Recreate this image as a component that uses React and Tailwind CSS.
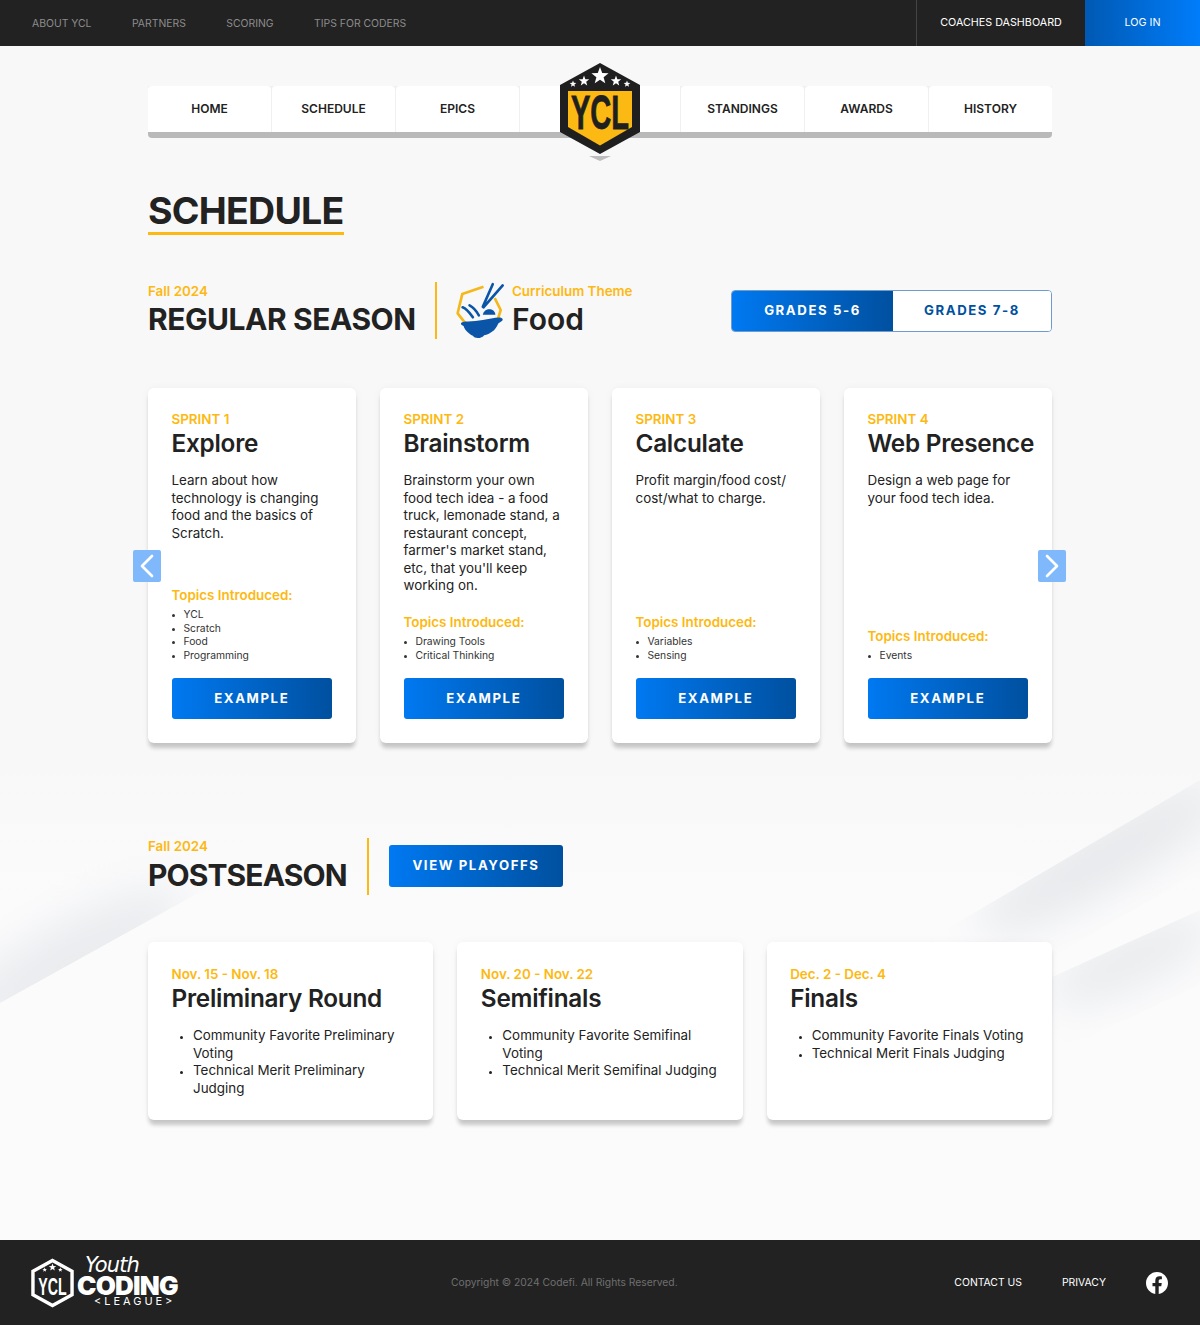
import { ChevronLeft, ChevronRight } from "lucide-react";

const sans = "font-['Inter','Liberation_Sans',sans-serif]";
const blueBtn = "bg-gradient-to-r from-[#0079f2] to-[#00509f] text-white font-bold tracking-[0.12em] rounded-[3px]";
const cardShadow = "shadow-[0_6px_4px_-1px_rgba(0,0,0,0.2),0_0_8px_rgba(0,0,0,0.04)]";

const topLinks = ["ABOUT YCL", "PARTNERS", "SCORING", "TIPS FOR CODERS"];
const leftTabs = ["HOME", "SCHEDULE", "EPICS"];
const rightTabs = ["STANDINGS", "AWARDS", "HISTORY"];

const sprints = [
  { label: "SPRINT 1", title: "Explore", text: ["Learn about how", "technology is changing", "food and the basics of", "Scratch."], topics: ["YCL", "Scratch", "Food", "Programming"] },
  { label: "SPRINT 2", title: "Brainstorm", text: ["Brainstorm your own", "food tech idea - a food", "truck, lemonade stand, a", "restaurant concept,", "farmer's market stand,", "etc, that you'll keep", "working on."], topics: ["Drawing Tools", "Critical Thinking"] },
  { label: "SPRINT 3", title: "Calculate", text: ["Profit margin/food cost/", "cost/what to charge."], topics: ["Variables", "Sensing"] },
  { label: "SPRINT 4", title: "Web Presence", text: ["Design a web page for", "your food tech idea."], topics: ["Events"] },
];

const rounds = [
  { date: "Nov. 15 - Nov. 18", title: "Preliminary Round", items: [["Community Favorite Preliminary", "Voting"], ["Technical Merit Preliminary", "Judging"]] },
  { date: "Nov. 20 - Nov. 22", title: "Semifinals", items: [["Community Favorite Semifinal", "Voting"], ["Technical Merit Semifinal Judging"]] },
  { date: "Dec. 2 - Dec. 4", title: "Finals", items: [["Community Favorite Finals Voting"], ["Technical Merit Finals Judging"]] },
];

function Lines({ lines }) {
  return lines.map((l, i) => <span key={i} className="block whitespace-nowrap">{l}</span>);
}

function Star({ cx, cy, r, fill }) {
  const pts = [];
  for (let i = 0; i < 10; i++) {
    const a = -Math.PI / 2 + (i * Math.PI) / 5;
    const d = i % 2 ? r * 0.42 : r;
    pts.push(`${cx + d * Math.cos(a)},${cy + d * Math.sin(a)}`);
  }
  return <polygon points={pts.join(" ")} fill={fill} />;
}

function Logo() {
  return (
    <svg width="80" height="98" viewBox="0 0 80 98">
      <polygon points="40,0 80,22 80,69 40,91 0,69 0,22" fill="#1f1f1f" />
      <polygon points="8,28 72,28 72,64 40,82.5 8,64" fill="#fdb913" />
      <Star cx={40} cy={13} r={9} fill="#fff" />
      <Star cx={24} cy={18} r={5.5} fill="#fff" />
      <Star cx={56} cy={18} r={5.5} fill="#fff" />
      <Star cx={13} cy={21} r={3.5} fill="#fff" />
      <Star cx={67} cy={21} r={3.5} fill="#fff" />
      <text x="40" y="0" textAnchor="middle" transform="translate(0 66) scale(1 1.45)" fontFamily="Liberation Sans" fontWeight="700" fontSize="33" textLength="58" lengthAdjust="spacingAndGlyphs" fill="#1f1f1f" stroke="#1f1f1f" strokeWidth="0.6">YCL</text>
      <polygon points="29,93 51,93 40,98" fill="#bdbdbd" />
    </svg>
  );
}

function FoodIcon() {
  return (
    <svg width="53" height="60" viewBox="100 30 160 180" fill="none">
      <path d="M192 50 L128 72 L114 130 L136 158 M226 84 L244 120 L234 152" stroke="#f5b81c" strokeWidth="8" strokeLinejoin="round" />
      <path d="M190 110 L220 42 M192 112 L250 46" stroke="#0a55a8" strokeWidth="8" strokeLinecap="round" />
      <path d="M129 112 C140 116 150 128 160 142 M150 106 C162 112 170 122 178 136" stroke="#0a55a8" strokeWidth="8" strokeLinecap="round" />
      <path d="M190 134 C194 112 226 112 228 134 Z" fill="#0a55a8" />
      <path d="M124 160 C126 152 160 156 190 150 C215 146 248 136 250 148 C250 156 240 156 236 162 C228 182 212 192 194 196 C188 206 166 208 160 198 C146 190 134 178 132 168 C128 166 124 166 124 160 Z" fill="#0a55a8" />
    </svg>
  );
}

function FooterLogo() {
  return (
    <div className="flex items-center">
      <svg width="43" height="50" viewBox="0 0 44 50" className="shrink-0">
        <polygon points="22,2 42,13 42,37 22,48 2,37 2,13" fill="none" stroke="#fff" strokeWidth="3.5" />
        <Star cx={22} cy={9} r={4} fill="#fff" />
        <Star cx={14} cy={11.5} r={2.5} fill="#fff" />
        <Star cx={30} cy={11.5} r={2.5} fill="#fff" />
        <text x="22" y="0" textAnchor="middle" transform="translate(0 37) scale(1 1.4)" fontFamily="Liberation Sans" fontWeight="700" fontSize="17" textLength="29" lengthAdjust="spacingAndGlyphs" fill="#fff">YCL</text>
      </svg>
      <div className="relative w-[102px] h-[50px] ml-[3px] text-white">
        <span className="absolute left-[8px] top-[-3px] text-[21px] leading-none font-['DejaVu_Sans',sans-serif] italic tracking-[-0.04em]">Youth</span>
        <span className="absolute left-0 top-[15px] text-[26px] leading-none font-black tracking-[-0.03em]">CODING</span>
        <span className="absolute left-[17px] top-[38px] text-[11px] leading-none tracking-[0.27em] whitespace-nowrap">&lt;LEAGUE&gt;</span>
      </div>
    </div>
  );
}

function Eyebrow({ children }) {
  return <div className="text-[#fdb913] text-[13.4px] leading-[17px] font-semibold">{children}</div>;
}

function Card({ s }) {
  return (
    <div className={`bg-white rounded-[6px] h-[355px] ${cardShadow} pl-[23.5px] pr-[24px] pt-[23px] pb-[24px] flex flex-col`}>
      <Eyebrow>{s.label}</Eyebrow>
      <h3 className="text-[#222] text-[24.3px] leading-[30px] font-semibold tracking-[-0.01em] whitespace-nowrap">{s.title}</h3>
      <p className="mt-[14px] text-[#222] text-[13.4px] leading-[17.5px]"><Lines lines={s.text} /></p>
      <div className="mt-auto">
        <div className="text-[#fdb913] text-[13.4px] leading-[17px] font-semibold">Topics Introduced:</div>
        <ul className="mt-[4px] text-[#333] text-[10.3px] leading-[13.5px] list-disc pl-[12px] marker:text-[8px]">
          {s.topics.map((t) => <li key={t}>{t}</li>)}
        </ul>
      </div>
      <button className={`mt-[16px] h-[41px] w-full text-[13.2px] ${blueBtn}`}>EXAMPLE</button>
    </div>
  );
}

function RoundCard({ r }) {
  return (
    <div className={`bg-white rounded-[6px] h-[178px] ${cardShadow} pl-[23.5px] pr-[24px] pt-[24px]`}>
      <Eyebrow>{r.date}</Eyebrow>
      <h3 className="text-[#222] text-[24.3px] leading-[30px] font-semibold tracking-[-0.01em]">{r.title}</h3>
      <ul className="mt-[14px] text-[#222] text-[13.4px] leading-[17.5px] list-disc pl-[21.5px] marker:text-[10px]">
        {r.items.map((it, i) => <li key={i}><Lines lines={it} /></li>)}
      </ul>
    </div>
  );
}

// faint diagonal folds behind the lower half of the page
function Background() {
  return (
    <svg className="absolute left-0 bottom-0" width="1200" height="480" viewBox="0 0 1200 480">
      <defs>
        <linearGradient id="bgFade" x1="0" y1="0" x2="0" y2="1">
          <stop offset="0" stopColor="#fbfbfc" stopOpacity="0" />
          <stop offset="0.3" stopColor="#fbfbfc" stopOpacity="1" />
        </linearGradient>
        <filter id="soft" x="-50%" y="-50%" width="200%" height="200%">
          <feGaussianBlur stdDeviation="22" />
        </filter>
        <clipPath id="foldLeft"><polygon points="0,243 420,10 0,10" /></clipPath>
        <clipPath id="foldRightTop"><polygon points="1200,20 800,255 1200,400" /></clipPath>
        <clipPath id="foldRightLow"><polygon points="1200,150 1052,217 1052,400 1200,400" /></clipPath>
      </defs>
      <rect x="0" y="0" width="1200" height="480" fill="url(#bgFade)" />
      <g clipPath="url(#foldLeft)"><ellipse cx="70" cy="200" rx="130" ry="36" transform="rotate(-29 70 200)" fill="#e9ebee" filter="url(#soft)" /></g>
      <g clipPath="url(#foldRightTop)"><ellipse cx="1100" cy="100" rx="140" ry="30" transform="rotate(-30 1100 100)" fill="#e6e8eb" filter="url(#soft)" /></g>
      <g clipPath="url(#foldRightLow)"><ellipse cx="1130" cy="200" rx="90" ry="26" transform="rotate(-25 1130 200)" fill="#e8eaec" filter="url(#soft)" /></g>
    </svg>
  );
}

export default function App() {
  return (
    <div className={`${sans} w-[1200px] min-h-[1325px] bg-[#f8f8f8] flex flex-col`}>
      <header className="h-[46px] bg-[#222] flex items-stretch">
        <nav className="flex items-center gap-[40.5px] pl-[32px] pt-[1px] text-[#8c8c8c] flex-1 text-[10.4px]">
          {topLinks.map((l) => <a key={l}>{l}</a>)}
        </nav>
        <a className="w-[169px] pt-[1px] border-l border-[#444] text-white flex items-center justify-center text-[10.75px]">COACHES DASHBOARD</a>
        <a className="w-[115px] pt-[1px] bg-gradient-to-r from-[#0059b3] to-[#007dfb] text-white flex items-center justify-center text-[10.75px]">LOG IN</a>
      </header>

      <main className="relative flex-1 overflow-hidden">
        <Background />
        <div className="relative w-[904px] mx-auto pt-[40px]">
          <div className="relative h-[52px] flex justify-between bg-[#f0f0f0] border-b-[6px] border-[#b9b9b9] rounded-b-[4px] text-[12px] font-semibold text-[#222]">
            <div className="flex gap-[1px]">
              {leftTabs.map((t) => <a key={t} className="w-[123px] bg-white flex items-center justify-center rounded-t-[4px]">{t}</a>)}
              <div className="w-[41px] bg-white"></div>
            </div>
            <div className="flex gap-[1px]">
              <div className="w-[41px] bg-white"></div>
              {rightTabs.map((t) => <a key={t} className="w-[123px] bg-white flex items-center justify-center rounded-t-[4px]">{t}</a>)}
            </div>
            <div className="absolute left-[412px] top-[-23px]"><Logo /></div>
          </div>

          <div className="mt-[51px]">
            <h1 className="inline-block text-[#222] text-[37.5px] leading-[43px] font-bold tracking-[-0.02em] border-b-[3px] border-[#fdb913]">SCHEDULE</h1>
          </div>

          <section className="mt-[47px] flex items-start h-[57px]">
            <div className="w-[287px] pt-[1px]">
              <Eyebrow>Fall 2024</Eyebrow>
              <h2 className="mt-[1px] text-[#222] text-[30px] leading-[36px] font-bold tracking-[-0.015em] whitespace-nowrap">REGULAR SEASON</h2>
            </div>
            <div className="w-[2px] h-[57px] bg-[#fdb913]"></div>
            <div className="ml-[16px] mt-[-2px]"><FoodIcon /></div>
            <div className="ml-[6px] pt-[1px]">
              <Eyebrow>Curriculum Theme</Eyebrow>
              <div className="mt-[1px] text-[#222] text-[30px] leading-[36px] font-semibold">Food</div>
            </div>
            <div className="ml-auto mt-[8px] flex h-[42px] w-[321px] rounded-[4px] overflow-hidden border border-[#6f9ccc] text-[13.2px] font-bold tracking-[0.12em]">
              <button className="w-[161px] bg-gradient-to-r from-[#0079f2] to-[#00509f] text-white">GRADES 5-6</button>
              <button className="flex-1 bg-white text-[#00509f]">GRADES 7-8</button>
            </div>
          </section>

          <section className="relative mt-[49px] grid grid-cols-4 gap-[24px]">
            {sprints.map((s) => <Card key={s.label} s={s} />)}
            <button className="absolute left-[-15px] top-[162px] w-[28px] h-[32px] bg-[#7fb8fb] rounded-[2px] flex items-center justify-center text-white"><ChevronLeft size={40} strokeWidth={1.6} className="shrink-0" /></button>
            <button className="absolute right-[-14px] top-[162px] w-[28px] h-[32px] bg-[#7fb8fb] rounded-[2px] flex items-center justify-center text-white"><ChevronRight size={40} strokeWidth={1.6} className="shrink-0" /></button>
          </section>

          <section className="mt-[95px] flex items-start h-[57px]">
            <div className="w-[219px]">
              <Eyebrow>Fall 2024</Eyebrow>
              <h2 className="mt-[2px] text-[#222] text-[30px] leading-[36px] font-bold tracking-[-0.03em]">POSTSEASON</h2>
            </div>
            <div className="w-[2px] h-[57px] bg-[#fdb913]"></div>
            <button className={`ml-[20px] mt-[7px] h-[42px] w-[174px] text-[13.2px] ${blueBtn}`}>VIEW PLAYOFFS</button>
          </section>

          <section className="mt-[47px] grid grid-cols-3 gap-[24px]">
            {rounds.map((r) => <RoundCard key={r.title} r={r} />)}
          </section>
        </div>
      </main>

      <footer className="h-[85px] bg-[#222] flex items-center pl-[31px] pr-[32px]">
        <FooterLogo />
        <div className="ml-[272px] text-[#6f6f6f] text-[10.3px]">Copyright © 2024 Codefi. All Rights Reserved.</div>
        <div className="ml-auto flex items-center gap-[40px] text-white text-[10.4px]">
          <a>CONTACT US</a>
          <a>PRIVACY</a>
          <svg width="22" height="22" viewBox="0 0 24 24" fill="#fff"><path d="M24 12.07C24 5.4 18.63 0 12 0S0 5.4 0 12.07c0 6.03 4.39 11.02 10.13 11.93v-8.44H7.08v-3.49h3.05V9.41c0-3.02 1.79-4.69 4.53-4.69 1.31 0 2.68.23 2.68.23v2.97h-1.51c-1.49 0-1.96.93-1.96 1.88v2.26h3.33l-.53 3.49h-2.8V24C19.61 23.09 24 18.1 24 12.07z" /></svg>
        </div>
      </footer>
    </div>
  );
}
